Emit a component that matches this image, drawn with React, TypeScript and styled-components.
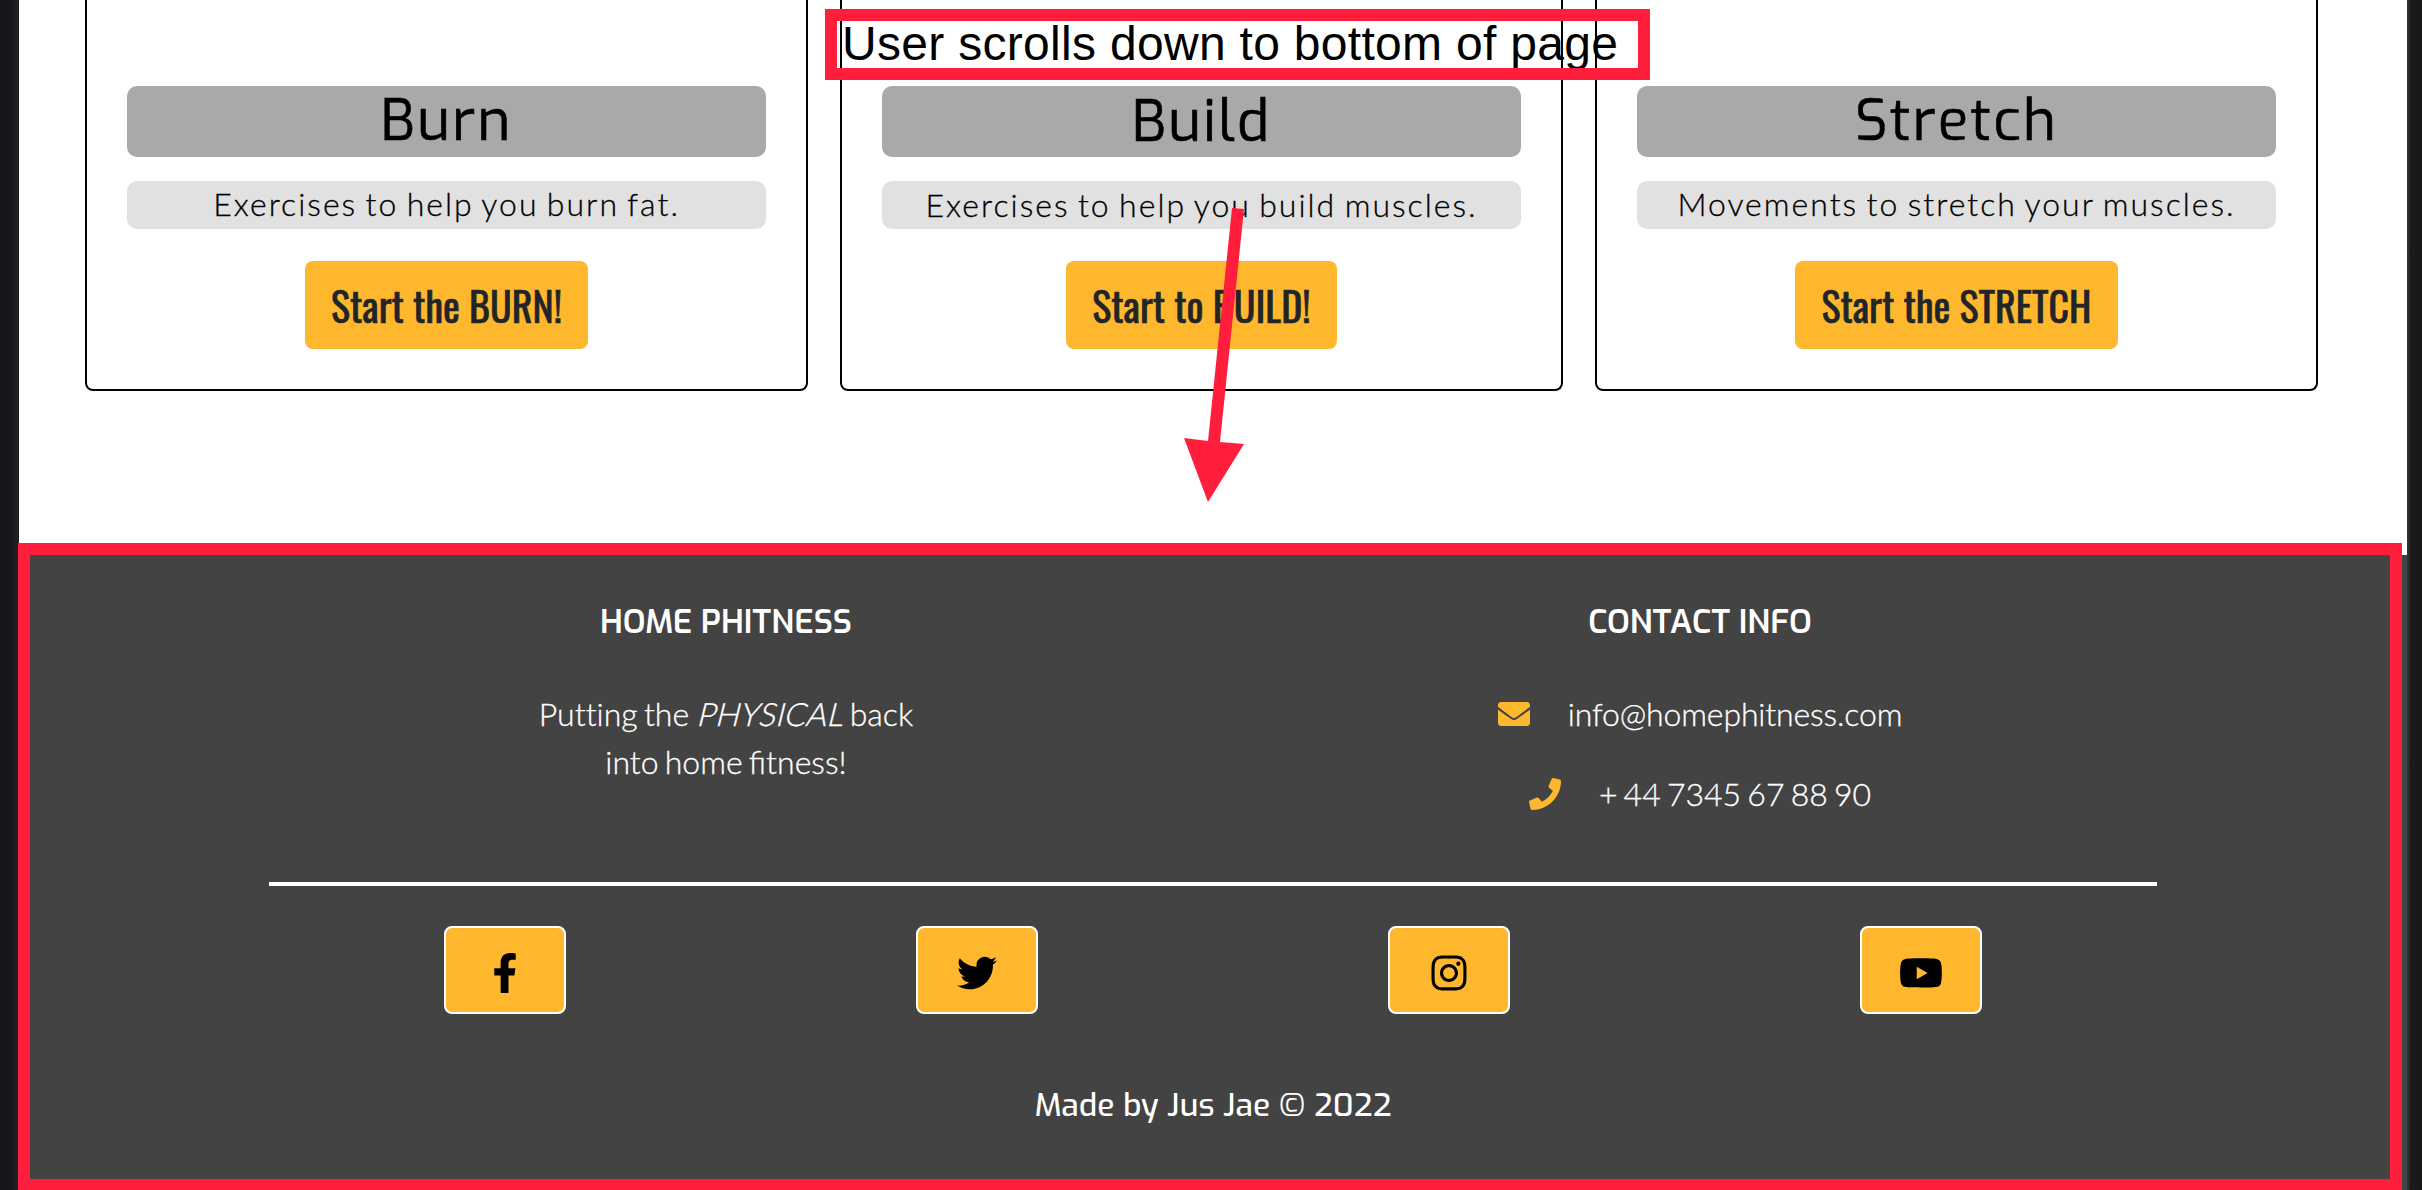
import React from "react";
import styled, { createGlobalStyle } from "styled-components";
import { FaEnvelope, FaPhone, FaFacebookF, FaTwitter, FaInstagram, FaYoutube } from "react-icons/fa";

const GlobalStyle = createGlobalStyle`
  * { box-sizing: border-box; }
  html, body { margin: 0; padding: 0; background: #17171a; overflow: hidden; }
`;

const yellow = "#ffb82e";
const red = "#ff1f3d";
const display = `"Exo", "Exo 2", "Noto Sans", sans-serif`;
const body = `"Lato", sans-serif`;

const Frame = styled.div`
  position: relative;
  width: 2422px;
  height: 1190px;
  overflow: hidden;
  padding: 0 15px 0 19px;
  background: linear-gradient(to right, #17171a 0 11px, #222226 18px, #17171a 19px 2407px, #303036 2407px 2409px, #1b1b1d 2410px, #161618 2422px);
`;

const Page = styled.div`
  height: 1190px;
  display: flex;
  flex-direction: column;
  background: #fff;
`;

const Cards = styled.main`
  flex: 0 0 555px;
  display: grid;
  grid-template-columns: repeat(3, 723px);
  gap: 32px;
  padding-left: 66px;
  align-items: start;
`;

const Card = styled.section`
  height: 391px;
  border: 2px solid #000;
  border-top: 0;
  border-radius: 0 0 8px 8px;
  padding: 86px 40px 0;
  display: flex;
  flex-direction: column;
  align-items: center;
`;

const CardTitle = styled.h2<{ $drop?: number }>`
  width: 100%;
  height: 71px;
  margin: 0 0 24px;
  padding-top: ${(p) => p.$drop ?? 0}px;
  border-radius: 10px;
  background: #a9a9a9;
  color: #000;
  font: 400 56.5px/70px ${display};
  letter-spacing: 2px;
  -webkit-text-stroke: 0.6px currentColor;
  text-align: center;
`;

const CardText = styled.p<{ $drop?: number }>`
  width: 100%;
  height: 48px;
  margin: 0 0 32px;
  padding-top: ${(p) => p.$drop ?? 0}px;
  border-radius: 10px;
  background: #e1e1e1;
  color: #000;
  font: 300 32px/46px ${body};
  letter-spacing: 2px;
  word-spacing: -2.3px;
  -webkit-text-stroke: 0.3px currentColor;
  text-align: center;
`;

const StartButton = styled.button<{ $width: number }>`
  width: ${(p) => p.$width}px;
  height: 88px;
  border: 0;
  border-radius: 8px;
  padding: 2px 0 0;
  background: ${yellow};
  color: #212529;
  font: 400 40px/84px "Oswald", "Roboto", sans-serif;
  -webkit-text-stroke: 0.6px currentColor;
  display: flex;
  justify-content: center;
  white-space: nowrap;
`;

const Footer = styled.footer`
  flex: 1;
  background: #434343;
  color: #fff;
  display: flex;
  flex-direction: column;
`;

const InfoRow = styled.div`
  height: 327px;
  display: grid;
  grid-template-columns: 974px 974px;
  padding-left: 220px;
`;

const InfoColumn = styled.div`
  display: flex;
  flex-direction: column;
  align-items: center;
  padding-top: 43px;
`;

const InfoTitle = styled.h3`
  margin: 0 0 44px;
  font: 600 32.8px/48px ${display};
`;

const InfoText = styled.p`
  margin: 0;
  font: 300 32px/48px ${body};
  word-spacing: -2.5px;
  -webkit-text-stroke: 0.3px currentColor;
  text-align: center;
  white-space: nowrap;
`;

const Slanted = styled.em`
  display: inline-block;
  margin: 0 -2px 0 4px;
  font-style: normal;
  letter-spacing: 0.1px;
  transform: skewX(-14deg);
`;

const Unjoined = styled.span`
  font-variant-ligatures: none;
`;

const ContactLine = styled.div<{ $gap?: number }>`
  display: flex;
  align-items: center;
  margin-bottom: 32px;
  font: 300 32px/48px ${body};
  letter-spacing: ${(p) => p.$gap ?? 0}px;
  word-spacing: -2.5px;
  -webkit-text-stroke: 0.3px currentColor;
  white-space: nowrap;

  svg {
    width: 32px;
    height: 32px;
    margin-right: 38px;
    color: ${yellow};
  }
`;

const SocialRow = styled.nav`
  width: 1888px;
  margin-left: 250px;
  padding-top: 40px;
  border-top: 4px solid #fff;
  display: grid;
  grid-template-columns: repeat(4, 1fr);
  justify-items: center;
`;

const SocialButton = styled.a`
  width: 122px;
  height: 88px;
  padding-top: 6px;
  border: 2px solid #fff;
  border-radius: 8px;
  background: ${yellow};
  color: #000;
  display: flex;
  align-items: center;
  justify-content: center;

  svg {
    width: 44px;
    height: 40px;
  }
`;

const Credit = styled.p`
  margin: 67px 0 0;
  font: 500 32px/48px ${display};
  text-align: center;
`;

const NoteFrame = styled.div`
  position: absolute;
  left: 825px;
  top: 9px;
  width: 825px;
  height: 71px;
  border: 12px solid ${red};
`;

const NoteText = styled.div`
  position: absolute;
  left: 842px;
  top: 16px;
  color: #000;
  font: 400 48px/55px "Liberation Sans", Arial, sans-serif;
  letter-spacing: 0.3px;
  white-space: nowrap;
`;

const FooterOutline = styled.div`
  position: absolute;
  left: 18px;
  top: 543px;
  width: 2384px;
  height: 648px;
  border: 12px solid ${red};
`;

const Arrow = styled.svg`
  position: absolute;
  left: 1180px;
  top: 200px;
`;

const cards = [
  { title: "Burn", text: "Exercises to help you burn fat.", action: "Start the BURN!", width: 283, drop: 0 },
  { title: "Build", text: "Exercises to help you build muscles.", action: "Start to BUILD!", width: 271, drop: 1 },
  { title: "Stretch", text: "Movements to stretch your muscles.", action: "Start the STRETCH", width: 323, drop: 0 },
];

export default function App() {
  return (
    <Frame>
      <GlobalStyle />
      <Page>
        <Cards>
          {cards.map((c) => (
            <Card key={c.title}>
              <CardTitle $drop={c.drop}>{c.title}</CardTitle>
              <CardText $drop={c.drop}>{c.text}</CardText>
              <StartButton $width={c.width}>{c.action}</StartButton>
            </Card>
          ))}
        </Cards>
        <Footer>
          <InfoRow>
            <InfoColumn>
              <InfoTitle>HOME PHITNESS</InfoTitle>
              <InfoText>
                <Unjoined>Putting</Unjoined> the <Slanted>PHYSICAL</Slanted> back
                <br />
                into home fitness!
              </InfoText>
            </InfoColumn>
            <InfoColumn>
              <InfoTitle>CONTACT INFO</InfoTitle>
              <ContactLine $gap={-0.15}>
                <FaEnvelope />
                info@homephitness.com
              </ContactLine>
              <ContactLine>
                <FaPhone />
                + 44 7345 67 88 90
              </ContactLine>
            </InfoColumn>
          </InfoRow>
          <SocialRow>
            <SocialButton><FaFacebookF /></SocialButton>
            <SocialButton><FaTwitter /></SocialButton>
            <SocialButton><FaInstagram /></SocialButton>
            <SocialButton><FaYoutube /></SocialButton>
          </SocialRow>
          <Credit>Made by Jus Jae © 2022</Credit>
        </Footer>
      </Page>
      <NoteText>User scrolls down to bottom of page</NoteText>
      <NoteFrame />
      <FooterOutline />
      <Arrow width="80" height="310" viewBox="1180 200 80 310" fill={red}>
        <path d="M1232 208 L1244 209 L1220 442 L1244 444 L1208 502 L1184 438 L1208 441 Z" />
      </Arrow>
    </Frame>
  );
}
